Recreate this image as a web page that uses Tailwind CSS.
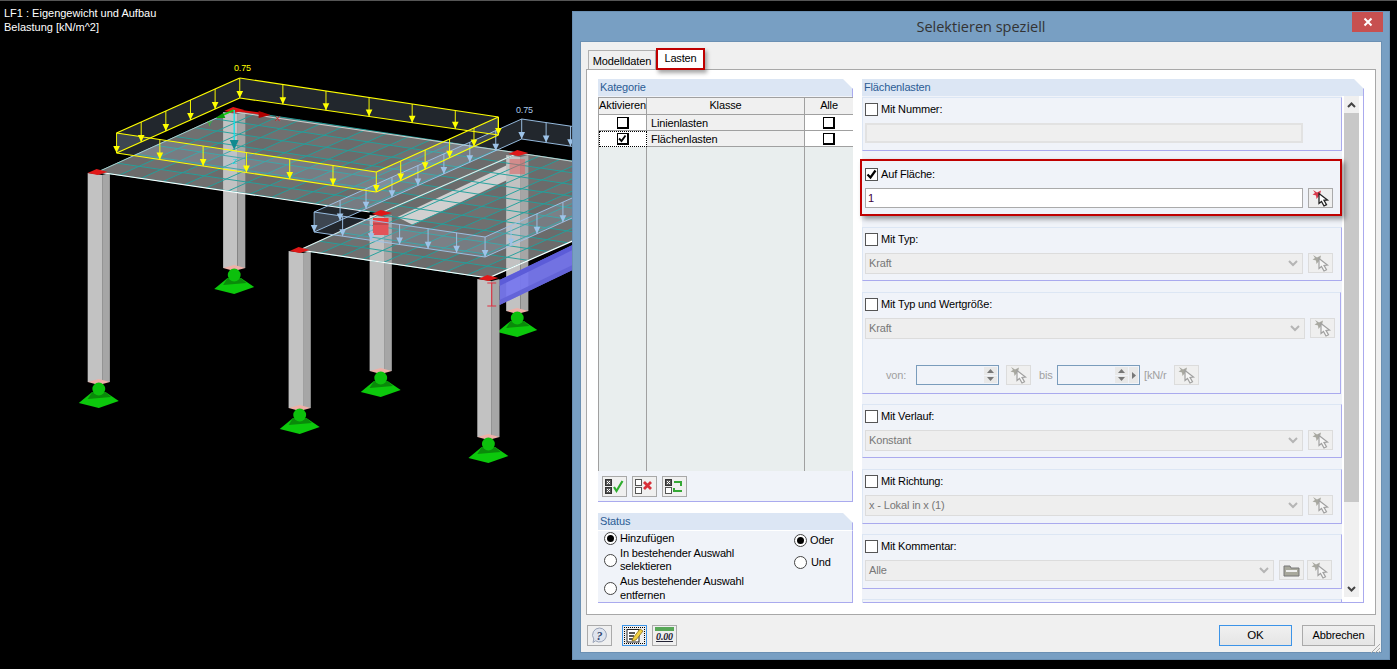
<!DOCTYPE html>
<html lang="de">
<head>
  <meta charset="UTF-8">
  <title>Selektieren speziell</title>
  <script src="https://cdn.jsdelivr.net/npm/@tailwindcss/browser@4"></script>
</head>
<body class="bg-black h-[669px] w-[1397px] overflow-hidden border-t border-[#555] flex font-['Liberation_Sans',sans-serif] text-[11px] leading-[13px] tracking-[-0.15px] text-black">

  <!-- icon symbols -->
  <svg width="0" height="0" class="absolute">
    <symbol id="pick" viewBox="0 0 23 18">
      <path d="M4 1l4 2.500 4-2-1 4 3 2-4.500 0-2 2.500-.5-3.500-3.500-1 2.500-1.500z" fill="currentColor"/>
      <path d="M10 4.500l0 10 2.500-2 2.500 4.500 2.500-1.300-2.500-4.300 3.500-.4z" fill="#fff" stroke="#222" stroke-width="1.300"/>
    </symbol>
    <symbol id="pickoff" viewBox="0 0 23 18">
      <path d="M4 1l4 2.500 4-2-1 4 3 2-4.500 0-2 2.500-.5-3.500-3.500-1 2.500-1.500z" fill="#a8a8a0"/>
      <path d="M10 4.500l0 10 2.500-2 2.500 4.500 2.500-1.300-2.500-4.300 3.500-.4z" fill="#f6f6f6" stroke="#a0a0a0" stroke-width="1.200"/>
    </symbol>
    <symbol id="chev" viewBox="0 0 10 7"><path d="M1 1l4 4 4-4" fill="none" stroke="#b5b5b5" stroke-width="2"/></symbol>
  </svg>

  <!-- 3D model view -->
  <div class="relative w-[572px] h-[668px] shrink-0 overflow-hidden">
    <svg id="model" width="572" height="668" viewBox="0 1 572 668" class="block">
      <g transform="scale(1.11 1)">
        <g id="fills"></g>
        <g id="columns"></g>
        <g id="scene"></g>
      </g>
      <text x="234" y="71" fill="#ffff00" font-size="9" font-family="Liberation Sans">0.75</text>
      <text x="516" y="113" fill="#a8c8e8" font-size="9" font-family="Liberation Sans">0.75</text>
      <text x="275" y="121" fill="#e02020" font-size="8" font-family="Liberation Sans">X</text>
      <text x="207" y="126" fill="#20d020" font-size="8" font-family="Liberation Sans">Y</text>
      <text x="232" y="164" fill="#10d8e0" font-size="8" font-family="Liberation Sans">Z</text>
    </svg>
    <p class="absolute left-[4px] top-[5px] text-white leading-[14px] tracking-normal">LF1 : Eigengewicht und Aufbau<br>Belastung [kN/m^2]</p>
  </div>

  <!-- dialog -->
  <div class="mt-[10px] w-[818px] h-[649px] shrink-0 bg-[#789fc3] border border-[#6b90b3] flex flex-col">
    <div class="h-[29px] flex relative shrink-0">
      <p class="flex-1 text-center text-[14.5px] tracking-normal leading-[29px] text-[#333] font-['Open_Sans',sans-serif]">Selektieren speziell</p>
      <div class="absolute right-[6px] top-0 w-[31px] h-[20px] bg-[#c75050] flex items-center justify-center">
        <svg width="10" height="10" viewBox="0 0 10 10"><path d="M1.500 1.500l7 7M8.500 1.500l-7 7" stroke="#fff" stroke-width="2"/></svg>
      </div>
    </div>

    <div class="mx-[7px] h-[612px] bg-[#f0f0f0] border border-[#6b90b3] flex flex-col">
      <!-- tabs -->
      <div class="h-[27px] pl-[7px] flex items-end shrink-0 relative z-10">
        <div class="h-[19px] w-[68px] bg-[#f0f0f0] border border-b-0 border-[#b0b0b0] text-center leading-[21px]">Modelldaten</div>
        <div class="h-[22px] w-[49px] bg-white border-2 border-[#c00000] text-center leading-[17px] shadow-[2px_3px_4px_rgba(0,0,0,0.35)] -mb-[1px]">Lasten</div>
      </div>

      <div class="mx-[5px] h-[546px] bg-white border border-[#a8a8a8] pt-[9px] pl-[11px] flex gap-[9px]">
        <!-- left column -->
        <div class="w-[255px] flex flex-col gap-[11px]">
          <section class="h-[423px] flex flex-col">
            <h3 class="h-[17px] pl-[2px] leading-[16px] text-[#2b5c94] bg-[#dce6f4] border-r border-[#aaaaee] [clip-path:polygon(0_0,calc(100%-10px)_0,100%_10px,100%_100%,0_100%)]">Kategorie</h3>
            <div class="flex-1 flex flex-col bg-[#f0f3f9] border-r border-b border-[#aaaaee] pt-[1px]">
              <div class="h-[374px] grid grid-cols-[48px_158px_48px] grid-rows-[18px_16px_16px_1fr] border-l border-[#a0a0a0]">
                <div class="bg-[#f0f0f0] border-r border-b border-t border-[#a0a0a0] text-center leading-[14px]">Aktivieren</div>
                <div class="bg-[#f0f0f0] border-r border-b border-t border-[#a0a0a0] text-center leading-[14px]">Klasse</div>
                <div class="bg-[#f0f0f0] border-b border-t border-[#a0a0a0] text-center leading-[14px]">Alle</div>

                <div class="bg-white border-r border-b border-[#a0a0a0] flex items-center justify-center"><span class="w-[12px] h-[12px] bg-white border border-black border-r-2 border-b-2"></span></div>
                <div class="bg-[#f0f0f0] border-r border-b border-[#a0a0a0] pl-[4px] leading-[17px]">Linienlasten</div>
                <div class="bg-white border-b border-[#a0a0a0] flex items-center justify-center"><span class="w-[12px] h-[12px] bg-white border border-black border-r-2 border-b-2"></span></div>

                <div class="bg-white border border-dotted border-black flex items-center justify-center"><span class="w-[12px] h-[12px] bg-white border border-black border-r-2 border-b-2 flex items-center justify-center"><svg width="9" height="9" viewBox="0 0 9 9"><path d="M1 4.500l2.500 2.500 4-5.500" fill="none" stroke="#000" stroke-width="1.800"/></svg></span></div>
                <div class="bg-[#f0f0f0] border-r border-b border-[#a0a0a0] pl-[4px] leading-[17px]">Flächenlasten</div>
                <div class="bg-white border-b border-[#a0a0a0] flex items-center justify-center"><span class="w-[12px] h-[12px] bg-white border border-black border-r-2 border-b-2"></span></div>

                <div class="bg-[#e9eeee] border-r border-[#a0a0a0]"></div>
                <div class="bg-[#e9eeee] border-r border-[#a0a0a0]"></div>
                <div class="bg-[#e9eeee]"></div>
              </div>
              <div class="flex gap-[5px] pl-[4px] pt-[5px]">
                <button class="w-[25px] h-[21px] bg-[#f0f0f0] border border-[#a8a8a8] flex items-center justify-center">
                  <svg width="21" height="17" viewBox="0 0 21 17"><rect x="1.500" y="1.500" width="6" height="6" fill="#555" stroke="#333"/><rect x="1.500" y="9.500" width="6" height="6" fill="#555" stroke="#333"/><path d="M3 3l3 3M6 3l-3 3M3 11l3 3M6 11l-3 3" stroke="#fff"/><path d="M10 9l2.500 4 6-10" fill="none" stroke="#2fae2f" stroke-width="2.200"/></svg>
                </button>
                <button class="w-[25px] h-[21px] bg-[#f0f0f0] border border-[#a8a8a8] flex items-center justify-center">
                  <svg width="21" height="17" viewBox="0 0 21 17"><rect x="1.500" y="1.500" width="6" height="6" fill="#fff" stroke="#555"/><rect x="1.500" y="9.500" width="6" height="6" fill="#fff" stroke="#555"/><path d="M10 4l7 7M17 4l-7 7" stroke="#d8303a" stroke-width="2.800"/></svg>
                </button>
                <button class="w-[25px] h-[21px] bg-[#f0f0f0] border border-[#a8a8a8] flex items-center justify-center">
                  <svg width="21" height="17" viewBox="0 0 21 17"><rect x="1.500" y="1.500" width="6" height="6" fill="#555" stroke="#333"/><rect x="1.500" y="9.500" width="6" height="6" fill="#fff" stroke="#555"/><path d="M3 3l3 3M6 3l-3 3" stroke="#fff"/><path d="M10 4h7v4M18 13h-8v-3" fill="none" stroke="#35a835" stroke-width="2"/></svg>
                </button>
              </div>
            </div>
          </section>

          <section class="h-[90px] flex flex-col">
            <h3 class="h-[17px] shrink-0 pl-[2px] leading-[16px] text-[#2b5c94] bg-[#dce6f4] border-r border-[#aaaaee] [clip-path:polygon(0_0,calc(100%-10px)_0,100%_10px,100%_100%,0_100%)]">Status</h3>
            <div class="h-[73px] bg-[#f0f3f9] border-r border-b border-[#aaaaee] flex pl-[6px] border-t border-t-white">
              <div class="w-[190px] flex flex-col">
                <label class="h-[15px] flex items-center gap-[3px]"><span class="w-[13px] h-[13px] rounded-full bg-white border border-[#444] flex items-center justify-center"><span class="w-[7px] h-[7px] rounded-full bg-black"></span></span>Hinzufügen</label>
                <label class="h-[28px] flex items-center gap-[3px]"><span class="w-[13px] h-[13px] shrink-0 rounded-full bg-white border border-[#444]"></span><span>In bestehender Auswahl<br>selektieren</span></label>
                <label class="h-[28px] flex items-center gap-[3px] leading-[14px]"><span class="w-[13px] h-[13px] shrink-0 rounded-full bg-white border border-[#444]"></span><span>Aus bestehender Auswahl<br>entfernen</span></label>
              </div>
              <div class="flex flex-col gap-[9px] pt-[3px]">
                <label class="h-[13px] flex items-center gap-[3px]"><span class="w-[13px] h-[13px] rounded-full bg-white border border-[#444] flex items-center justify-center"><span class="w-[7px] h-[7px] rounded-full bg-black"></span></span>Oder</label>
                <label class="h-[13px] flex items-center gap-[4px]"><span class="w-[13px] h-[13px] rounded-full bg-white border border-[#444]"></span>Und</label>
              </div>
            </div>
          </section>
        </div>

        <!-- right column -->
        <section class="w-[502px] h-[524px] flex flex-col">
          <h3 class="h-[17px] shrink-0 pl-[2px] leading-[16px] text-[#2b5c94] bg-[#dce6f4] border-r border-[#aaaaee] [clip-path:polygon(0_0,calc(100%-10px)_0,100%_10px,100%_100%,0_100%)]">Flächenlasten</h3>
          <div class="h-[507px] bg-white border-r border-b border-[#aaaaee] flex">
            <div class="w-[480px] h-[506px] shrink-0 bg-[#f0f3f9] pt-[1px] flex flex-col">

              <div class="h-[54px] shrink-0 border border-[#dce6f4] border-r-[#aaaaee] border-b-[#aaaaee] pl-[2px] pt-[4px]">
                <label class="h-[14px] flex items-center gap-[3px]"><span class="w-[13px] h-[13px] bg-white border border-[#555]"></span>Mit Nummer:</label>
                <div class="mt-[7px] w-[438px] h-[20px] bg-[#efefef] border-2 border-[#e2e2e2]"></div>
              </div>

              <div class="mt-[8px] -ml-[2px] w-[482px] h-[57px] shrink-0 border-2 border-[#c00000] shadow-[3px_3px_5px_rgba(0,0,0,0.4)] pl-[3px] pt-[6px] relative z-10 bg-[#f0f3f9]">
                <label class="h-[14px] flex items-center gap-[3px]"><span class="w-[13px] h-[13px] bg-white border border-[#555] flex items-center justify-center"><svg width="11" height="11" viewBox="0 0 11 11"><path d="M1.500 5.500l3 3 5-7" fill="none" stroke="#000" stroke-width="2.200"/></svg></span>Auf Fläche:</label>
                <div class="mt-[7px] flex gap-[5px]">
                  <div class="w-[438px] h-[20px] bg-white border border-[#aaa] pl-[2px] leading-[18px] text-[#400040]">1</div>
                  <div class="w-[25px] h-[20px] bg-[#efefef] border border-[#aaa] text-[#d8384a]"><svg width="23" height="18"><use href="#pick"/></svg></div>
                </div>
              </div>

              <div class="mt-[11px] h-[54px] shrink-0 border border-[#dce6f4] border-r-[#aaaaee] border-b-[#aaaaee] pl-[2px] pt-[4px]">
                <label class="h-[14px] flex items-center gap-[3px]"><span class="w-[13px] h-[13px] bg-white border border-[#555]"></span>Mit Typ:</label>
                <div class="mt-[7px] flex gap-[5px]">
                  <div class="w-[438px] h-[21px] bg-[#eeeeee] border border-[#dcdcdc] pl-[3px] leading-[19px] text-[#777] flex justify-between items-center pr-[4px]">Kraft<svg width="10" height="7"><use href="#chev"/></svg></div>
                  <div class="w-[25px] h-[20px] bg-[#efefef] border border-[#dcdcdc]"><svg width="23" height="18"><use href="#pickoff"/></svg></div>
                </div>
              </div>

              <div class="mt-[11px] h-[102px] shrink-0 w-[479px] border border-[#dce6f4] border-r-[#aaaaee] border-b-[#aaaaee] pl-[2px] pt-[4px]">
                <label class="h-[14px] flex items-center gap-[3px]"><span class="w-[13px] h-[13px] bg-white border border-[#555]"></span>Mit Typ und Wertgröße:</label>
                <div class="mt-[7px] flex gap-[5px]">
                  <div class="w-[440px] h-[21px] bg-[#eeeeee] border border-[#dcdcdc] pl-[3px] leading-[19px] text-[#777] flex justify-between items-center pr-[4px]">Kraft<svg width="10" height="7"><use href="#chev"/></svg></div>
                  <div class="w-[25px] h-[20px] bg-[#efefef] border border-[#dcdcdc]"><svg width="23" height="18"><use href="#pickoff"/></svg></div>
                </div>
                <div class="mt-[26px] flex items-center h-[20px] text-[#a0a0a0]">
                  <span class="ml-[21px] w-[30px]">von:</span>
                  <div class="w-[83px] h-[20px] bg-[#f0f3f9] border border-[#7a9cbc] flex justify-end pr-[1px]"><div class="w-[13px] flex flex-col gap-[1px] py-[1px]"><span class="h-[8px] bg-[#e8e8e8] flex items-center justify-center"><svg width="7" height="4"><path d="M0 4l3.500-4 3.500 4z" fill="#777"/></svg></span><span class="h-[8px] bg-[#e8e8e8] flex items-center justify-center"><svg width="7" height="4"><path d="M0 0l3.500 4 3.500-4z" fill="#777"/></svg></span></div></div>
                  <div class="ml-[7px] w-[25px] h-[20px] bg-[#efefef] border border-[#dcdcdc]"><svg width="23" height="18"><use href="#pickoff"/></svg></div>
                  <span class="ml-[8px] w-[18px]">bis</span>
                  <div class="w-[83px] h-[20px] bg-[#f0f3f9] border border-[#7a9cbc] flex justify-end pr-[1px] gap-[1px]"><div class="w-[13px] flex flex-col gap-[1px] py-[1px]"><span class="h-[8px] bg-[#e8e8e8] flex items-center justify-center"><svg width="7" height="4"><path d="M0 4l3.500-4 3.500 4z" fill="#777"/></svg></span><span class="h-[8px] bg-[#e8e8e8] flex items-center justify-center"><svg width="7" height="4"><path d="M0 0l3.500 4 3.500-4z" fill="#777"/></svg></span></div><span class="w-[9px] my-[1px] bg-[#e8e8e8] flex items-center justify-center"><svg width="4" height="7"><path d="M0 0l4 3.500-4 3.500z" fill="#777"/></svg></span></div>
                  <span class="ml-[4px] w-[30px]">[kN/r</span>
                  <div class="w-[25px] h-[20px] bg-[#efefef] border border-[#dcdcdc]"><svg width="23" height="18"><use href="#pickoff"/></svg></div>
                </div>
              </div>

              <div class="mt-[10px] h-[54px] shrink-0 border border-[#dce6f4] border-r-[#aaaaee] border-b-[#aaaaee] pl-[2px] pt-[4px]">
                <label class="h-[14px] flex items-center gap-[3px]"><span class="w-[13px] h-[13px] bg-white border border-[#555]"></span>Mit Verlauf:</label>
                <div class="mt-[7px] flex gap-[5px]">
                  <div class="w-[438px] h-[21px] bg-[#eeeeee] border border-[#dcdcdc] pl-[3px] leading-[19px] text-[#777] flex justify-between items-center pr-[4px]">Konstant<svg width="10" height="7"><use href="#chev"/></svg></div>
                  <div class="w-[25px] h-[20px] bg-[#efefef] border border-[#dcdcdc]"><svg width="23" height="18"><use href="#pickoff"/></svg></div>
                </div>
              </div>

              <div class="mt-[11px] h-[55px] shrink-0 border border-[#dce6f4] border-r-[#aaaaee] border-b-[#aaaaee] pl-[2px] pt-[4px]">
                <label class="h-[14px] flex items-center gap-[3px]"><span class="w-[13px] h-[13px] bg-white border border-[#555]"></span>Mit Richtung:</label>
                <div class="mt-[7px] flex gap-[5px]">
                  <div class="w-[438px] h-[21px] bg-[#eeeeee] border border-[#dcdcdc] pl-[3px] leading-[19px] text-[#777] flex justify-between items-center pr-[4px]">x - Lokal in x (1)<svg width="10" height="7"><use href="#chev"/></svg></div>
                  <div class="w-[25px] h-[20px] bg-[#efefef] border border-[#dcdcdc]"><svg width="23" height="18"><use href="#pickoff"/></svg></div>
                </div>
              </div>

              <div class="mt-[10px] h-[55px] shrink-0 border border-[#dce6f4] border-r-[#aaaaee] border-b-[#aaaaee] pl-[2px] pt-[4px]">
                <label class="h-[14px] flex items-center gap-[3px]"><span class="w-[13px] h-[13px] bg-white border border-[#555]"></span>Mit Kommentar:</label>
                <div class="mt-[7px] flex gap-[5px]">
                  <div class="w-[409px] h-[21px] bg-[#eeeeee] border border-[#dcdcdc] pl-[3px] leading-[19px] text-[#777] flex justify-between items-center pr-[4px]">Alle<svg width="10" height="7"><use href="#chev"/></svg></div>
                  <div class="w-[25px] h-[20px] bg-[#efefef] border border-[#dcdcdc] flex items-center justify-center"><svg width="17" height="13" viewBox="0 0 17 13"><path d="M1 2h6l1 2h8v8H1z" fill="#a8a89c" stroke="#777"/><path d="M3 7h11" stroke="#eee" stroke-width="2"/></svg></div>
                  <div class="-ml-[2px] w-[25px] h-[20px] bg-[#efefef] border border-[#dcdcdc]"><svg width="23" height="18"><use href="#pickoff"/></svg></div>
                </div>
              </div>

              <div class="mt-[10px] h-[4px] shrink-0 border border-b-0 border-[#dce6f4] border-r-[#aaaaee]"></div>
            </div>
            <!-- scrollbar -->
            <div class="ml-[2px] w-[15px] h-[501px] bg-[#f0f0f0] flex flex-col">
              <div class="h-[17px] flex items-center justify-center"><svg width="9" height="6" viewBox="0 0 9 6"><path d="M1 5l3.500-3.500L8 5" fill="none" stroke="#444" stroke-width="2"/></svg></div>
              <div class="h-[389px] bg-[#c8c8c8]"></div>
              <div class="flex-1 flex items-end justify-center pb-[5px]"><svg width="9" height="6" viewBox="0 0 9 6"><path d="M1 1l3.500 3.500L8 1" fill="none" stroke="#444" stroke-width="2"/></svg></div>
            </div>
          </div>
        </section>
      </div>

      <!-- bottom buttons -->
      <div class="flex pt-[10px] pl-[6px] pr-[6px] relative">
        <button class="w-[25px] h-[21px] bg-[#efefef] border border-[#aaa] flex items-center justify-center">
          <svg width="19" height="17" viewBox="0 0 19 17"><path d="M9.500 1a7 7 0 1 1-4 12.800L3 15.500l.8-3.500A7 7 0 0 1 9.500 1z" fill="#dfe4ee" stroke="#9aa4b8"/><text x="6.500" y="12.500" font-size="12" font-weight="700" font-style="italic" fill="#34466e" font-family="Liberation Serif">?</text></svg>
        </button>
        <button class="ml-[10px] w-[25px] h-[21px] bg-[#efefef] border border-[#3c94e8] flex items-center justify-center">
          <span class="w-[21px] h-[17px] border border-dotted border-black flex items-center justify-center">
            <svg width="19" height="15" viewBox="0 0 19 15"><rect x="2" y="1.500" width="12" height="12.500" fill="#fff" stroke="#222"/><path d="M4 5h6M4 8h5M4 11h7" stroke="#222" stroke-width="1.400"/><path d="M8 10l7-9 3 2-7 9-4 1z" fill="#f0d040" stroke="#806010" stroke-width="0.700"/></svg>
          </span>
        </button>
        <button class="ml-[5px] w-[25px] h-[21px] bg-[#efefef] border border-[#aaa] flex flex-col items-center pt-[1px]">
          <span class="w-[19px] h-[4px] bg-[#58a858]"></span>
          <span class="text-[10px] leading-[12px] font-bold italic font-['Liberation_Serif',serif] text-[#223] underline">0.00</span>
        </button>
        <button class="ml-auto w-[73px] h-[21px] bg-[linear-gradient(#f0f0f0,#e5e5e5)] border border-[#3c94e8] text-center text-[11.5px]">OK</button>
        <button class="ml-[10px] w-[73px] h-[21px] bg-[linear-gradient(#f0f0f0,#e5e5e5)] border border-[#aaa] text-center text-[11px]">Abbrechen</button>
        <svg width="12" height="12" class="absolute right-0 bottom-[-8px]" viewBox="0 0 12 12"><path d="M11 2l-9 9M11 6l-5 5M11 9l-2 2" stroke="#aaa"/></svg>
      </div>
    </div>
  </div>

  <script>
    var fills = document.getElementById('fills');
    var scene = document.getElementById('scene');
    var cols = document.getElementById('columns');
    var NS = 'http://www.w3.org/2000/svg';
    function add(parent, tag, attrs) {
      var el = document.createElementNS(NS, tag);
      for (var k in attrs) el.setAttribute(k, attrs[k]);
      parent.appendChild(el);
      return el;
    }
    function poly(parent, pts, fill, op) {
      return add(parent, 'polygon', { points: pts.map(function (p) { return p.join(','); }).join(' '), fill: fill, opacity: op == null ? 1 : op });
    }
    function line(parent, a, b, color, w, op) {
      return add(parent, 'line', { x1: a[0], y1: a[1], x2: b[0], y2: b[1], stroke: color, 'stroke-width': w || 1, opacity: op == null ? 1 : op });
    }
    function lerp(a, b, t) { return [a[0] + (b[0] - a[0]) * t, a[1] + (b[1] - a[1]) * t]; }

    // columns with their supports
    function column(x, top, bottom) {
      poly(cols, [[x, top], [x + 13, top + 2], [x + 13, bottom], [x, bottom]], '#c2c2c2');
      poly(cols, [[x + 13, top + 2], [x + 20, top], [x + 20, bottom], [x + 13, bottom]], '#a6a6a6');
      poly(cols, [[x, bottom], [x + 10, bottom - 3], [x + 20, bottom], [x + 10, bottom + 3]], '#eeb0a8');
      var c = x + 10, b = bottom + 7;
      poly(cols, [[c - 6, b + 3], [c + 6, b + 3], [c + 18, b + 12], [c, b + 19], [c - 18, b + 14]], '#0cc80c');
      poly(cols, [[c - 6, b + 3], [c + 6, b + 3], [c + 11, b + 8], [c - 10, b + 10]], '#0a8a0a');
      add(cols, 'ellipse', { cx: c, cy: b, rx: 5.800, ry: 6.500, fill: '#0cc00c' });
    }

    // slab with mesh
    function slabFill(a, b, c, d, nu, nv) {
      poly(fills, [a, b, c, d], '#707070');
      for (var i = 0; i < nu; i++) for (var j = 0; j < nv; j++) {
        if ((i + j) % 2) {
          poly(fills, [lerp(lerp(a, d, i / nu), lerp(b, c, i / nu), j / nv), lerp(lerp(a, d, (i + 1) / nu), lerp(b, c, (i + 1) / nu), j / nv), lerp(lerp(a, d, (i + 1) / nu), lerp(b, c, (i + 1) / nu), (j + 1) / nv), lerp(lerp(a, d, i / nu), lerp(b, c, i / nu), (j + 1) / nv)], '#5c5c5c', 0.25);
        }
      }
    }
    function slabGrid(a, b, c, d, nu, nv) {
      for (var u = 0; u <= nu; u++) line(scene, lerp(a, d, u / nu), lerp(b, c, u / nu), '#22a09c', 0.9);
      for (var v = 0; v <= nv; v++) line(scene, lerp(a, b, v / nv), lerp(d, c, v / nv), '#22a09c', 0.9);
    }
    var s1 = [[88, 172], [211, 110], [467, 153], [343, 213], 13, 7];
    var s2 = [[270, 250], [467, 153], [637, 181], [440, 278], 9, 11];
    slabFill.apply(null, s1);
    slabFill.apply(null, s2);

    // light band of the beam under the slab
    poly(fills, [[358, 217], [457, 165], [457, 180], [372, 225]], '#d0d0d0');

    column(79, 173, 382);
    column(201, 112, 268);
    column(333, 215, 371);
    column(456, 155, 311);
    column(260, 251, 408);

    // beam in front of the back column
    poly(cols, [[450, 280], [516, 245], [516, 270], [450, 305]], '#7878ee', 0.95);
    poly(cols, [[450, 280], [516, 245], [516, 250], [450, 286]], '#5c5cd8');
    poly(cols, [[450, 300], [516, 265], [516, 270], [450, 305]], '#6464d8');
    column(430, 279, 437);
    line(cols, [443, 283], [443, 306], '#e03040');
    line(cols, [439, 283], [447, 283], '#e03040');
    line(cols, [439, 306], [447, 306], '#e03040');

    slabGrid.apply(null, s1);
    slabGrid.apply(null, s2);

    // white edges
    line(scene, [88, 172], [333, 212], '#fff', 1.200);
    line(scene, [270, 250], [440, 278], '#fff', 1.200);
    line(scene, [343, 213], [270, 250], '#e8e8e8', 1);
    line(scene, [212, 112], [467, 153], '#cfcfcf', 1);
    line(scene, [467, 153], [520, 162], '#cfcfcf', 1);
    line(scene, [343, 213], [467, 153], '#e8e8e8', 1);
    line(scene, [440, 278], [520, 239], '#fff', 1.200);
    line(scene, [88, 172], [211, 110], '#cfcfcf', 0.800);

    // red inlays
    poly(scene, [[336, 218], [350, 218], [350, 235], [336, 235]], '#f03838');
    line(scene, [336, 224], [350, 224], '#a02020', 1);
    poly(scene, [[459, 159], [473, 159], [473, 174], [459, 174]], '#e06060', 0.55);

    // node marks
    [[88, 172], [211, 110], [270, 250], [344, 213], [440, 278], [467, 153]].forEach(function (p) {
      poly(scene, [[p[0] - 9, p[1] + 1], [p[0] - 1, p[1] - 3], [p[0] + 9, p[1]], [p[0], p[1] + 3]], '#e01818');
    });

    // area load box: top corners, then bottom corners. faces are see-through
    function loadbox(t, b, color, n, w) {
      poly(scene, [t[0], t[1], b[1], b[0]], '#aac4e0', 0.2);
      poly(scene, [t[1], t[2], b[2], b[1]], '#aac4e0', 0.2);
      poly(scene, [t[0], t[3], b[3], b[0]], '#aac4e0', 0.2);
      poly(scene, [t[3], t[2], b[2], b[3]], '#aac4e0', 0.2);
      function arrow(p, q) {
        line(scene, p, q, color, 0.9);
        poly(scene, [[q[0] - 3, q[1] - 7], [q[0] + 3, q[1] - 7], q], color);
      }
      for (var e = 0; e < 4; e++) {
        var f = (e + 1) % 4;
        for (var i = 0; i < n[e]; i++) {
          arrow(lerp(t[e], t[f], i / n[e]), lerp(b[e], b[f], i / n[e]));
        }
      }
      [[t[0], t[1]], [t[1], t[2]], [t[2], t[3]], [t[3], t[0]], [b[0], b[1]], [b[1], b[2]], [b[2], b[3]], [b[3], b[0]]].forEach(function (s) {
        line(scene, s[0], s[1], color, w);
      });
      line(scene, t[2], b[2], color, w);
    }
    loadbox([[283, 212], [470, 119], [624, 144], [437, 237]], [[283, 232], [470, 139], [624, 164], [437, 257]], '#9dc3e8', [8, 7, 8, 6], 0.9);
    loadbox([[105, 133], [216, 78], [449, 117], [339, 172]], [[105, 153], [216, 98], [449, 135], [339, 192]], '#ffff00', [5, 6, 5, 6], 1.100);

    // axes
    line(scene, [211, 110], [238, 114], '#e01010', 2);
    poly(scene, [[233, 111], [244, 115], [233, 118]], '#b00000');
    line(scene, [211, 110], [199, 116], '#10d010', 1.500);
    poly(scene, [[201, 113], [194, 118], [203, 118]], '#0a9a0a');
    line(scene, [211, 110], [211, 143], '#10e0e8', 1.200);
    poly(scene, [[207, 140], [215, 140], [211, 150]], '#108a90');
  </script>
</body>
</html>
